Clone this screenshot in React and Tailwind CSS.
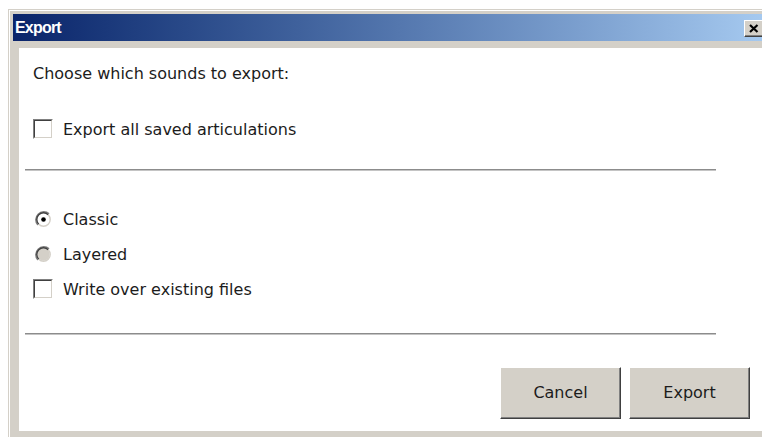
import React from 'react'

// Classic 3D colours
const FACE = 'bg-[#d4d0c8]'

function CheckBox() {
  return (
    <div className="w-[20px] h-[20px] border-t border-l border-t-[#808080] border-l-[#808080] border-b border-r border-b-white border-r-white">
      <div className="w-full h-full bg-white border-t border-l border-t-[#404040] border-l-[#404040] border-b border-r border-b-[#d4d0c8] border-r-[#d4d0c8]" />
    </div>
  )
}

function Radio({ checked = false, disabled = false }) {
  return (
    <svg width="17" height="17" viewBox="0 0 17 17">
      <circle cx="8.5" cy="8.5" r="6.2" fill={disabled ? '#d4d0c8' : '#ffffff'} />
      <path d="M2.85 14.15 A8 8 0 0 1 14.15 2.85" fill="none" stroke="#808080" strokeWidth="1.4" />
      <path d="M14.15 2.85 A8 8 0 0 1 2.85 14.15" fill="none" stroke="#ffffff" strokeWidth="1.4" />
      <path d="M3.75 13.25 A6.7 6.7 0 0 1 13.25 3.75" fill="none" stroke="#404040" strokeWidth="1.4" />
      <path d="M13.25 3.75 A6.7 6.7 0 0 1 3.75 13.25" fill="none" stroke="#d4d0c8" strokeWidth="1.4" />
      {checked && <circle cx="8.5" cy="8.5" r="2.3" fill="#000000" />}
    </svg>
  )
}

function Option({ control, label, tall }) {
  return (
    <div className={`flex items-center ${tall ? 'h-[20px]' : 'h-[19px]'}`}>
      <div className="w-[20px] flex items-center justify-center">{control}</div>
      <span className="ml-[10px] leading-[19px]">{label}</span>
    </div>
  )
}

function Separator({ className = '' }) {
  return (
    <div className={`ml-[6px] w-[691px] h-[2px] border-t border-t-[#8c8c8c] border-b border-b-[#c4c4c4] ${className}`} />
  )
}

function Button({ children }) {
  return (
    <button className={`w-[121px] h-[52px] ${FACE} border-t border-l border-t-white border-l-white border-b border-r border-b-[#404040] border-r-[#404040] shadow-[inset_-1px_-1px_#808080] text-[16px] text-[#1c1c1c]`}>
      {children}
    </button>
  )
}

export default function App() {
  return (
    <div
      className="w-[762px] h-[437px] overflow-hidden bg-white pl-[8px] pt-[9px]"
      style={{ fontFamily: '"DejaVu Sans", Verdana, sans-serif' }}
    >
      <div className="w-[780px] h-[440px] border-t border-l border-[#d4d0c8]">
        <div className="h-full border-t border-l border-white">
          <div className={`h-full ${FACE} pt-[3px] pl-[3px]`}>
            {/* Title bar */}
            <div className="w-[753px] h-[27px] flex items-center justify-between bg-linear-to-r from-[#0a246a] to-[#a6caf0]">
              <span
                className="pl-[2px] text-white font-bold text-[16px] tracking-[-0.8px]"
                style={{ fontFamily: '"Liberation Sans", Arial, sans-serif' }}
              >
                Export
              </span>
              <div className={`mr-[2px] mt-[1px] w-[20px] h-[17px] ${FACE} border-t border-l border-t-white border-l-white border-b border-r border-b-[#404040] border-r-[#404040] shadow-[inset_-1px_-1px_#808080] flex items-center justify-center`}>
                <svg width="10" height="9" viewBox="0 0 10 9">
                  <path d="M1 1 L8.5 8 M8.5 1 L1 8" stroke="#000" strokeWidth="2.2" />
                </svg>
              </div>
            </div>

            {/* Client area */}
            <div className="mt-[7px] ml-[6px] w-[760px] h-[383px] bg-white text-[16px] text-[#1c1c1c] flex flex-col">
              <div className="pl-[14px] pt-[16px] leading-[19px]">Choose which sounds to export:</div>

              <div className="pl-[14px] mt-[36px]">
                <Option tall control={<CheckBox />} label="Export all saved articulations" />
              </div>

              <Separator className="mt-[30px]" />

              <div className="pl-[14px] mt-[39px] flex flex-col gap-[16px]">
                <Option control={<Radio checked />} label="Classic" />
                <Option control={<Radio disabled />} label="Layered" />
              </div>

              <div className="pl-[14px] mt-[15px]">
                <Option tall control={<CheckBox />} label="Write over existing files" />
              </div>

              <Separator className="mt-[34px]" />

              <div className="mt-[32px] w-[731px] flex justify-end gap-[8px]">
                <Button>Cancel</Button>
                <Button>Export</Button>
              </div>
            </div>
          </div>
        </div>
      </div>
    </div>
  )
}
